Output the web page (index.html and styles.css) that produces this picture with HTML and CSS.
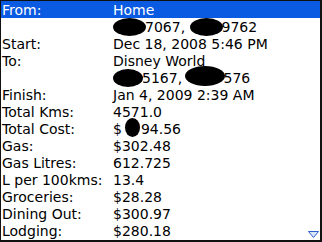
FILE: index.html
```html
<!DOCTYPE html>
<html>
<head>
<meta charset="utf-8">
<link rel="stylesheet" href="styles.css">
</head>
<body>
<div class="screen">
  <div class="row selected"><span class="label">From:</span><span class="value">Home</span></div>
  <div class="row"><span class="label"></span><span class="value"><span class="blot"></span>7067, <span class="blot"></span>9762</span></div>
  <div class="row"><span class="label">Start:</span><span class="value">Dec 18, 2008 5:46 PM</span></div>
  <div class="row"><span class="label">To:</span><span class="value">Disney World</span></div>
  <div class="row"><span class="label"></span><span class="value"><span class="blot short"></span>5167, <span class="blot tall"></span>576</span></div>
  <div class="row"><span class="label">Finish:</span><span class="value">Jan 4, 2009 2:39 AM</span></div>
  <div class="row"><span class="label">Total Kms:</span><span class="value">4571.0</span></div>
  <div class="row"><span class="label">Total Cost:</span><span class="value">$<span class="blot dot"></span>94.56</span></div>
  <div class="row"><span class="label">Gas:</span><span class="value">$302.48</span></div>
  <div class="row"><span class="label">Gas Litres:</span><span class="value">612.725</span></div>
  <div class="row"><span class="label">L per 100kms:</span><span class="value">13.4</span></div>
  <div class="row"><span class="label">Groceries:</span><span class="value">$28.28</span></div>
  <div class="row"><span class="label">Dining Out:</span><span class="value">$300.97</span></div>
  <div class="row"><span class="label">Lodging:</span><span class="value">$280.18</span></div>
  <svg class="scroll" width="11" height="7" viewBox="0 0 11 7"><polygon points="0.5,0.5 10.5,0.5 5.5,6.5" fill="#dbe6f8" stroke="#2a5fd0" stroke-width="1"/></svg>
</div>
</body>
</html>
```
FILE: styles.css
```css
html, body {
  margin: 0;
  padding: 0;
  background: #111;
}
.screen {
  position: relative;
  width: 319px;
  height: 239px;
  margin: 1px 2px 2px 1px;
  background: #fff;
  overflow: hidden;
  font-family: "DejaVu Sans", sans-serif;
  font-size: 14px;
  color: #000;
}
.row {
  display: grid;
  grid-template-columns: 111px 1fr;
  height: 17px;
  line-height: 17px;
  padding-left: 1px;
  white-space: nowrap;
  overflow: visible;
}
.row > span {
  display: block;
  height: 17px;
  padding-top: 1px;
}
.selected {
  background: #0b5ae2;
  color: #fff;
}
.blot {
  display: inline-block;
  width: 33px;
  height: 18px;
  margin: -6px -1px -6px 0;
  border-radius: 50%;
  background: #000;
  vertical-align: 2px;
}
.blot.short {
  width: 30px;
}
.blot.tall {
  width: 40px;
  height: 20px;
  margin-left: -2px;
  vertical-align: 3px;
}
.blot.dot {
  width: 15px;
  height: 19px;
  margin: -6px 1px -6px 3px;
  vertical-align: 3px;
}
.scroll {
  position: absolute;
  right: 1px;
  bottom: 2px;
}
```
